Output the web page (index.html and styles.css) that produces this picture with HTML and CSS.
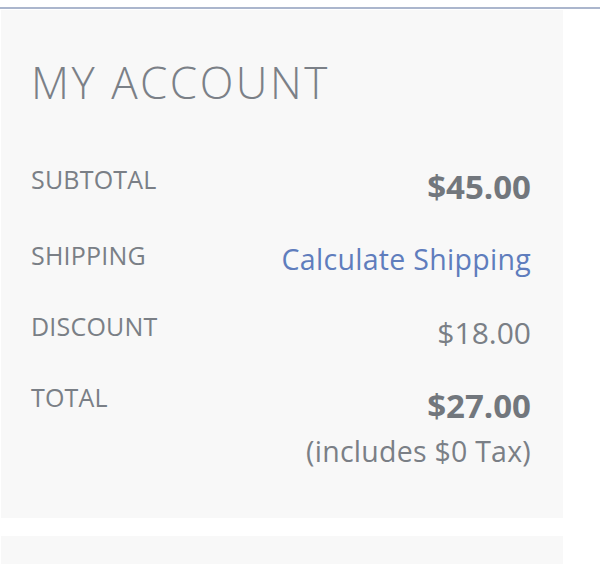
FILE: index.html
```html
<!DOCTYPE html>
<html>
<head>
<meta charset="utf-8">
<link rel="stylesheet" href="styles.css">
</head>
<body>
<div class="topline"></div>
<section class="panel">
  <h2 class="title">MY ACCOUNT</h2>
  <div class="row row-first">
    <span class="label">SUBTOTAL</span>
    <span class="amount amount-big">$45.00</span>
  </div>
  <div class="row">
    <span class="label">SHIPPING</span>
    <a class="link" href="#">Calculate Shipping</a>
  </div>
  <div class="row">
    <span class="label">DISCOUNT</span>
    <span class="amount">$18.00</span>
  </div>
  <div class="row row-last">
    <span class="label">TOTAL</span>
    <div class="total">
      <span class="amount amount-big amount-total">$27.00</span>
      <span class="tax">(includes $0 Tax)</span>
    </div>
  </div>
</section>
<section class="panel panel-next"></section>
</body>
</html>
```
FILE: styles.css
```css
html, body {
  margin: 0;
  padding: 0;
  background: #ffffff;
}
body {
  font-family: "Open Sans", "Noto Sans", sans-serif;
  color: #777c83;
}
.topline {
  height: 2px;
  margin-top: 7px;
  background: #abb6cd;
}
.panel {
  width: 562px;
  margin: 1px 0 0 1px;
  background: #f8f8f8;
  box-sizing: border-box;
  padding: 47px 32px 50px 30px;
}
.title {
  margin: 0 0 57px 0;
  font-size: 44px;
  line-height: 50px;
  font-weight: 300;
  letter-spacing: 2.5px;
  color: #7b8087;
}
.row {
  display: flex;
  justify-content: space-between;
  align-items: flex-start;
  min-height: 71px;
}
.row-first {
  min-height: 76px;
}
.row-last {
  min-height: 0;
}
.label {
  font-size: 25px;
  line-height: 30px;
  letter-spacing: 0.2px;
  color: #7a7f86;
}
.amount {
  font-size: 30px;
  line-height: 34px;
  margin-top: 5px;
  color: #7a7f86;
}
.amount-big {
  font-size: 33px;
  line-height: 36px;
  font-weight: 700;
  margin-top: 5px;
  color: #72777d;
}
.amount-total {
  margin-top: 6px;
}
.link {
  font-size: 28.5px;
  line-height: 34px;
  margin-top: 2px;
  letter-spacing: 0.3px;
  color: #5f7dbd;
  text-decoration: none;
}
.total {
  display: flex;
  flex-direction: column;
  align-items: flex-end;
}
.tax {
  font-size: 28.5px;
  line-height: 34px;
  margin-top: 10px;
  letter-spacing: 0.25px;
  color: #7a7f86;
}
.panel-next {
  margin-top: 18px;
  height: 40px;
  padding: 0;
}
```
